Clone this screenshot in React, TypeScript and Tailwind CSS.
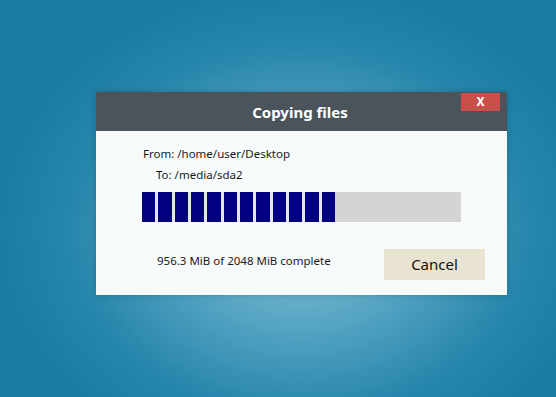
const blocks = Array.from({ length: 12 }, (_, i) => i);

export default function App() {
  return (
    <div
      className="w-[556px] h-[397px] overflow-hidden pt-[92px] pl-[96px] bg-[radial-gradient(ellipse_310px_250px_at_300px_230px,#8ac6da_0%,#4d9fbf_45%,#2585ab_75%,#1a7aa1_100%)]"
      style={{ fontFamily: '"Noto Sans", "Open Sans", sans-serif' }}
    >
      <div className="w-[411px] h-[203px] bg-[#f6fafa] flex flex-col shadow-[0_0_6px_rgba(0,40,60,0.25)]">
        {/* title bar */}
        <div className="relative h-[39px] bg-[#4a545a] flex items-center justify-center">
          <span className="text-white text-[15px] font-bold leading-none pt-[2px] pr-[3px]">Copying files</span>
          <button className="absolute top-[1px] right-[7px] w-[39px] h-[18px] bg-[#c94f4b] text-white text-[12px] font-bold leading-none flex items-center justify-center">
            X
          </button>
        </div>

        {/* body */}
        <div className="flex flex-col pl-[46px] pr-[22px]">
          <div className="mt-[14px] pl-[1px] text-[11.5px] leading-[17px] text-[#1a1a1a]">From: /home/user/Desktop</div>
          <div className="mt-[4px] pl-[14px] text-[11.5px] leading-[17px] text-[#1a1a1a]">To: /media/sda2</div>

          <div className="mt-[9px] w-[319px] h-[30px] bg-[#d4d4d4] flex">
            <div className="w-[193px] flex gap-[3px] bg-[#e4e4ee] h-full">
              {blocks.map((i) => (
                <div key={i} className="flex-1 h-full bg-[#000080]" />
              ))}
            </div>
          </div>

          <div className="mt-[27px] flex items-start">
            <div className="pl-[15px] pt-[3px] text-[11.5px] leading-[17px] text-[#1a1a1a] w-[242px]">
              956.3 MiB of 2048 MiB complete
            </div>
            <button className="w-[101px] h-[31px] bg-[#e9e3d2] text-[15px] text-[#111] leading-none flex items-center justify-center">
              Cancel
            </button>
          </div>
        </div>
      </div>
    </div>
  );
}
